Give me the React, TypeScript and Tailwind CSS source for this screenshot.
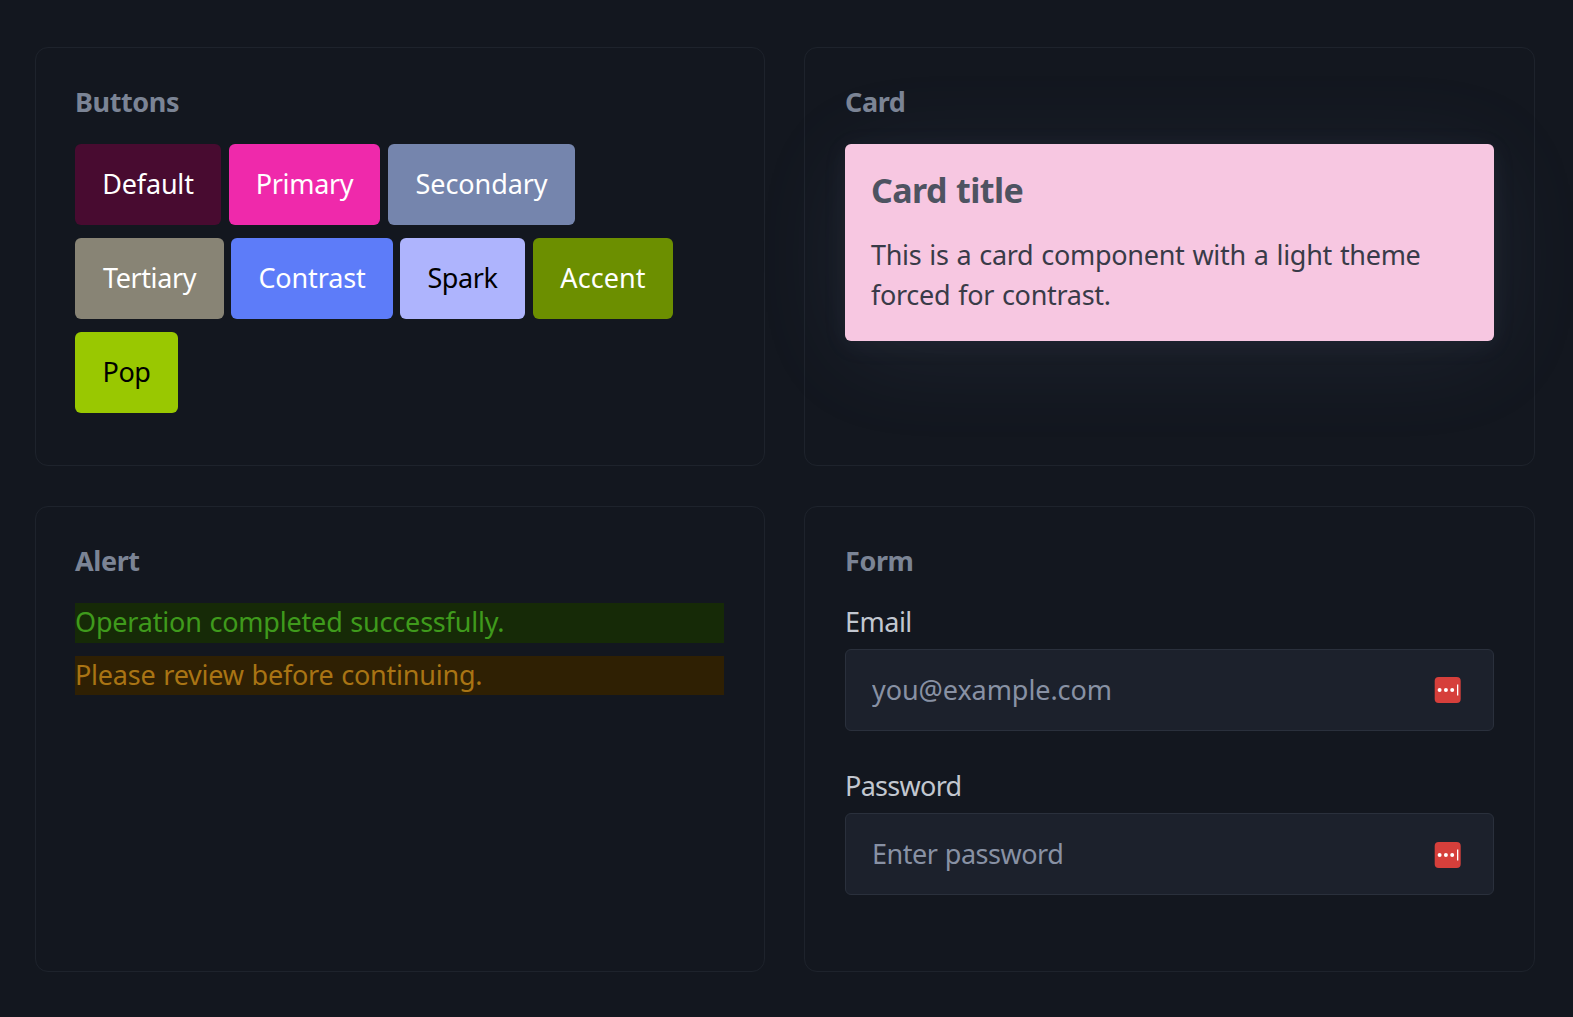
import type { ReactNode } from 'react';

interface PanelProps {
  title: string;
  className: string;
  children: ReactNode;
}

function Panel({ title, className, children }: PanelProps) {
  return (
    <section className={`rounded-[13px] border border-[#1e232c] pt-[34px] pr-10 ${className}`}>
      <h2 className="mb-[22px] text-[27px] leading-10 font-bold tracking-[-0.4px] text-[#7b8495]">
        {title}
      </h2>
      {children}
    </section>
  );
}

const buttonRows = [
  [
    { label: 'Default', className: 'w-[146px] bg-[#480b30] text-white tracking-[-0.2px]' },
    { label: 'Primary', className: 'w-[151px] ml-2 bg-[#ef29ab] text-white tracking-[-0.35px]' },
    { label: 'Secondary', className: 'w-[187px] ml-2 bg-[#7585ad] text-white tracking-[-0.1px]' },
  ],
  [
    { label: 'Tertiary', className: 'w-[149px] bg-[#888475] text-white tracking-[-0.4px]' },
    { label: 'Contrast', className: 'w-[162px] ml-[7px] bg-[#5d7cf9] text-white tracking-[-0.15px]' },
    { label: 'Spark', className: 'w-[125px] ml-[7px] bg-[#aeb4fd] text-black tracking-[-0.4px]' },
    { label: 'Accent', className: 'w-[140px] ml-2 bg-[#6c8f00] text-white tracking-[0.1px]' },
  ],
  [{ label: 'Pop', className: 'w-[103px] bg-[#99c801] text-black tracking-[-0.5px]' }],
];

function PasswordManagerIcon({ className = '' }: { className?: string }) {
  return (
    <svg width="27" height="26" viewBox="0 0 27 26" className={`shrink-0 ${className}`}>
      <rect x="0.7" width="26" height="26" rx="4" fill="#d63f3b" />
      <circle cx="5.6" cy="13" r="2" fill="#fff" />
      <circle cx="11.9" cy="13" r="2" fill="#fff" />
      <circle cx="18.2" cy="13" r="2" fill="#fff" />
      <rect x="23" y="7.5" width="1.3" height="11" fill="#fff" />
    </svg>
  );
}

interface FieldProps {
  id: string;
  label: string;
  type: string;
  placeholder: string;
  labelClass: string;
  inputClass: string;
  iconClass?: string;
}

function Field({ id, label, type, placeholder, labelClass, inputClass, iconClass }: FieldProps) {
  return (
    <div className="mb-[35px]">
      <label htmlFor={id} className={`mb-[7px] block leading-10 text-[#c2c7d0] ${labelClass}`}>
        {label}
      </label>
      <div className="flex h-[82px] items-center rounded-md border border-[#2a303c] bg-[#1c212c] pr-8 pl-[26px]">
        <input
          id={id}
          type={type}
          placeholder={placeholder}
          className={`min-w-0 flex-1 bg-transparent outline-none placeholder:text-[#8891a4] ${inputClass}`}
        />
        <PasswordManagerIcon className={iconClass} />
      </div>
    </div>
  );
}

export default function App() {
  return (
    <main className="grid h-[1017px] w-[1573px] grid-cols-[730px_731px] grid-rows-[419px_466px] gap-x-[39px] gap-y-10 overflow-hidden bg-[#13171f] pt-[47px] pl-[35px] font-['Noto_Sans',sans-serif] text-[27px]">
      <Panel title="Buttons" className="pl-[39px]">
        <div className="flex flex-col gap-[13px]">
          {buttonRows.map((row, i) => (
            <div key={i} className="flex">
              {row.map((button) => (
                <button
                  key={button.label}
                  className={`h-[81px] rounded-md text-center whitespace-nowrap ${button.className}`}
                >
                  {button.label}
                </button>
              ))}
            </div>
          ))}
        </div>
      </Panel>

      <Panel title="Card" className="pl-10">
        <article className="h-[197px] rounded-md bg-[#f7c7e1] px-[26px] pt-[26px] shadow-[0_4px_24px_rgba(150,150,190,0.08),0_14px_100px_rgba(130,155,195,0.09)]">
          <h3 className="text-[34px] leading-10 font-bold tracking-[-0.6px] text-[#4e5361] [word-spacing:1px]">
            Card title
          </h3>
          <p className="mt-[25px] leading-10 tracking-[-0.3px] whitespace-nowrap text-[#393b48] [word-spacing:1.2px]">
            This is a card component with a light theme
            <br />
            forced for contrast.
          </p>
        </article>
      </Panel>

      <Panel title="Alert" className="pl-[39px]">
        <div className="mb-[13px] h-10 bg-[#162a07] leading-[38px] tracking-[-0.2px] text-[#3f9a1c] [word-spacing:1px]">
          Operation completed successfully.
        </div>
        <div className="h-[39px] bg-[#2f2003] leading-[38px] tracking-[-0.23px] text-[#a97414] [word-spacing:1px]">
          Please review before continuing.
        </div>
      </Panel>

      <Panel title="Form" className="pl-10">
        <div className="-mt-px">
          <Field
            id="email"
            label="Email"
            type="email"
            placeholder="you@example.com"
            labelClass="tracking-[-0.5px]"
            inputClass="tracking-[-0.07px]"
          />
          <Field
            id="password"
            label="Password"
            type="password"
            placeholder="Enter password"
            labelClass="tracking-[-0.7px]"
            inputClass="tracking-[-0.5px] [word-spacing:1px]"
            iconClass="mt-0.5"
          />
        </div>
      </Panel>
    </main>
  );
}
